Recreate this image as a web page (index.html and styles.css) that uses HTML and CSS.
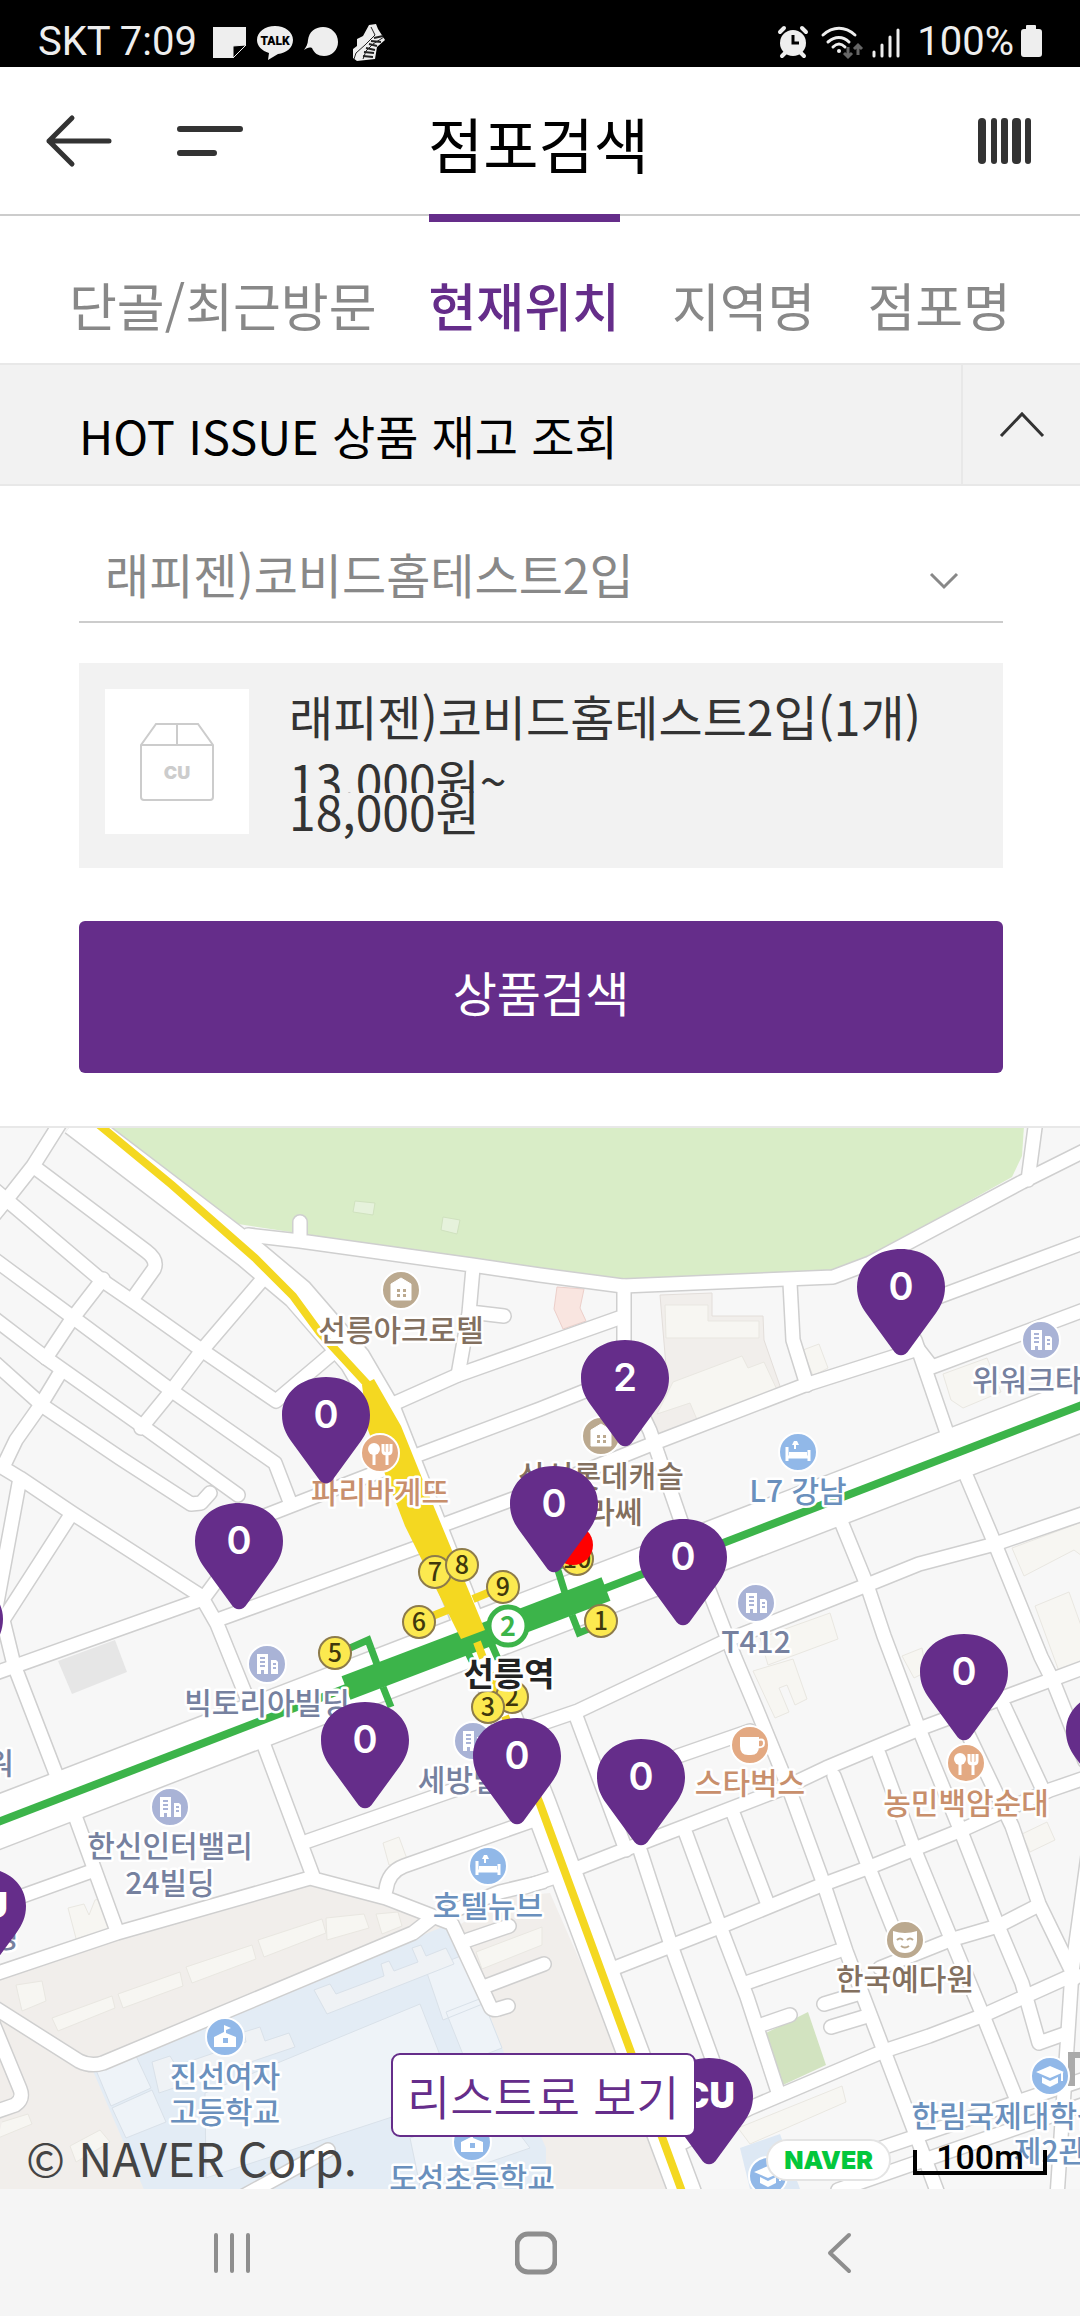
FILE: index.html
```html
<!DOCTYPE html>
<html lang="ko">
<head>
  <meta charset="UTF-8" />
  <meta name="viewport" content="width=device-width, initial-scale=1.0"/>
  <title>점포검색</title>
  <link rel="stylesheet" href="styles.css">
</head>
<body>
  <div class="status-bar">
    <div class="status-group">
      <span>SKT 7:09</span>
      <svg class="status-icons" width="172" height="38" viewBox="0 0 172 38" aria-hidden="true">
        <path d="M0 4h33v18L20 35H0z" fill="#eee"/>
        <path d="M33 22L20 35V23z" fill="#000" stroke="#eee"/>
        <path d="M62 3c10 0 18 6 18 14s-7 13-15 14l-10 6 1-7c-7-2-12-7-12-13 0-8 8-14 18-14z" fill="#eee"/>
        <text x="62" y="22" class="talk">TALK</text>
        <path d="M110 4c8 0 15 6 15 15 0 8-6 14-14 14-6 0-10-3-12-8-3-1-5 0-8 2 2-3 4-6 4-10 1-8 7-13 15-13z" fill="#eee"/>
        <path d="M156 2l7-1 2 5 7 11-8 7-2 12-18 2-4-3v-9l4-3v-7l6-3z" fill="#eee"/>
        <path d="M158 4l4 8-10 10-9 8-2 6M171 14l-11 7-7 7-3 8" fill="none" stroke="#222"/>
        <path d="M161 15l9-2M158 18l10 1M156 21l8 2M153 25l9 2M151 29l10 1M150 33l10 1" stroke="#222" stroke-width="2"/>
      </svg>
    </div>
    <div class="status-group">
      <svg class="status-icons" width="128" height="38" viewBox="0 0 128 38" aria-hidden="true">
        <circle cx="16" cy="20" r="13" fill="#eee"/>
        <path d="M3 9l4-4M29 9l-4-4M5 33l4-4M27 33l-4-4" stroke="#eee" stroke-width="4" stroke-linecap="round"/>
        <path d="M16 12v8h6" fill="none" stroke="#000" stroke-width="3"/>
        <g fill="none" stroke="#eee" stroke-width="3" stroke-linecap="round">
          <path d="M46 12c10-9 22-9 32 0M51 19c7-6 15-6 21 0M56 24c4-4 8-4 12 0"/>
        </g>
        <circle cx="62" cy="28" r="2" fill="#eee"/>
        <path d="M71 24v10m-4-4l4 4 4-4M81 32V22m-4 4l4-4 4 4" fill="none" stroke="#666" stroke-width="3"/>
        <path d="M97 33v-4M105 33V22M113 33V14M121 33V7" stroke="#eee" stroke-width="3" stroke-linecap="round"/>
      </svg>
      <span>100%</span>
      <svg width="22" height="36" viewBox="0 0 22 36" aria-hidden="true">
        <path d="M7 1h8q1 0 1 1v3h3q3 0 3 3v22q0 3-3 3H4q-3 0-3-3V8q0-3 3-3h2V2q0-1 1-1z" fill="#eee"/>
      </svg>
    </div>
  </div>

  <header class="header">
    <div class="header-side">
      <button class="icon-button" aria-label="뒤로">
        <svg width="68" height="54" viewBox="0 0 68 54"><path d="M27 4L4 27l23 23M4 27h60" fill="none" stroke="#333" stroke-width="5" stroke-linecap="round" stroke-linejoin="round"/></svg>
      </button>
      <button class="icon-button" aria-label="메뉴">
        <svg width="68" height="54" viewBox="0 0 68 54"><path d="M5 15h60M5 39h34" stroke="#333" stroke-width="6" stroke-linecap="round"/></svg>
      </button>
    </div>
    <h1>점포검색</h1>
    <div class="header-side header-right">
      <button class="icon-button" aria-label="바코드">
        <svg width="54" height="46" viewBox="0 0 54 46" fill="#333">
          <rect width="8" height="46" rx="4"/><rect x="13" width="6" height="46" rx="3"/><rect x="23" width="7" height="46" rx="3"/><rect x="34" width="9" height="46" rx="4"/><rect x="47" width="6" height="46" rx="3"/>
        </svg>
      </button>
    </div>
  </header>

  <nav class="tabs">
    <a href="#">단골/최근방문</a>
    <a href="#" class="active">현재위치</a>
    <a href="#">지역명</a>
    <a href="#">점포명</a>
  </nav>

  <div class="issue">
    <h2>HOT ISSUE 상품 재고 조회</h2>
    <button class="issue-toggle" aria-label="접기">
      <svg width="46" height="28" viewBox="0 0 46 28"><path d="M2 25L23 3l21 22" fill="none" stroke="#333" stroke-width="3"/></svg>
    </button>
  </div>

  <main class="search">
    <div class="select-wrap">
      <select class="product-select" aria-label="상품 선택">
        <option>래피젠)코비드홈테스트2입</option>
      </select>
      <svg class="select-arrow" width="30" height="18" viewBox="0 0 30 18" aria-hidden="true"><path d="M2 2l13 13L28 2" fill="none" stroke="#888" stroke-width="3"/></svg>
    </div>

    <div class="product">
      <div class="product-image">
        <svg width="76" height="80" viewBox="0 0 76 80" aria-hidden="true">
          <path d="M2 23L17 2h42l15 21v52q0 3-3 3H5q-3 0-3-3zM2 23h72M38 2v21" fill="none" stroke="#ccc" stroke-width="2"/>
          <text x="38" y="57" class="box-logo">CU</text>
        </svg>
      </div>
      <div class="product-text">
        <p class="product-name">래피젠)코비드홈테스트2입(1개)</p>
        <p class="price price-from">13,000원~</p>
        <p class="price">18,000원</p>
      </div>
    </div>

    <button class="search-button">상품검색</button>
  </main>

  <section class="map">
    <svg class="map-canvas" viewBox="0 0 1080 1061" role="img" aria-label="선릉역 주변 지도">
      <defs>
        <path id="pin" d="M0 0C25 0 44 16 44 38c0 11-4 19-9 26L8 101c-4 7-12 7-16 0l-27-37c-5-7-9-15-9-26C-44 16-25 0 0 0z"/>
        <g id="house">
          <circle r="19" fill="#bba98f" stroke="#fff" stroke-width="2"/>
          <path d="M-10-6L0-12l10 6v16h-20z" fill="#fff" stroke="#fff" stroke-linejoin="round"/>
          <path d="M-4 -1h3v3h-3zM2-1h3v3H2zM-4 4h3v3h-3zM2 4h3v3H2z" fill="#bba98f"/>
        </g>
        <g id="food">
          <circle r="19" fill="#e3a982" stroke="#fff" stroke-width="2"/>
          <circle cx="-6" cy="-4" r="6" fill="#fff"/>
          <path d="M-6 0v12M7-9v21M3-9v7q0 3 4 3t4-3v-7" fill="none" stroke="#fff" stroke-width="3"/>
        </g>
        <g id="cafe">
          <circle r="19" fill="#e3a982" stroke="#fff" stroke-width="2"/>
          <path d="M-10-8H9v9q0 9-8 9h-3q-8 0-8-9z" fill="#fff"/>
          <path d="M8-5q6-2 6 3t-6 4" fill="none" stroke="#fff" stroke-width="2"/>
        </g>
        <g id="office">
          <circle r="19" fill="#a9b3d6" stroke="#fff" stroke-width="2"/>
          <path d="M-10-10H1v20h-4V6h-3v4h-4z" fill="#fff"/>
          <path d="M4-4h5l2 2v12H4z" fill="#fff"/>
          <path d="M-7-6h5M-7-2h5M-7 2h5M6 0h3M6 4h3" stroke="#a9b3d6" stroke-width="2"/>
        </g>
        <g id="hotel">
          <circle r="19" fill="#91b8e8" stroke="#fff" stroke-width="2"/>
          <path d="M-11-5V9M11-2V9M-11 5h22" stroke="#fff" stroke-width="3"/>
          <path d="M-9 0H9v4H-9zM-6-7l2-4h3l2 4h-3v4h-2v-4z" fill="#fff"/>
        </g>
        <g id="school">
          <circle r="19" fill="#91b8e8" stroke="#fff" stroke-width="2"/>
          <path d="M-11 0L-1-5v-7l7 3-5 2v3l10 4v10h-22z" fill="#fff"/>
          <path d="M-2 1h5v5h-5z" fill="#91b8e8"/>
        </g>
        <g id="college">
          <circle r="19" fill="#91b8e8" stroke="#fff" stroke-width="2"/>
          <path d="M0-10l14 6L0 2l-14-6zM-8 1l8 4 8-4v6L0 11l-8-4z" fill="#fff"/>
          <path d="M12-4v9" stroke="#fff" stroke-width="2"/>
        </g>
        <g id="mask">
          <circle r="19" fill="#bba98f" stroke="#fff" stroke-width="2"/>
          <path d="M-12-9Q0-5 12-9V1Q11 13 0 13T-12 1z" fill="#fff"/>
          <path d="M-8 0q3-3 6 0M2 0q3-3 6 0M-4 6q4 3 8 0" fill="none" stroke="#bba98f" stroke-width="2"/>
        </g>
        <!-- street centre lines, stroked twice: casing then surface -->
        <g id="streets" fill="none" stroke-linecap="round" stroke-linejoin="round">
          <!-- north west -->
          <path d="M62-8L33 38 7 71-10 92M33 38l113 85q12 9 8 18l-20 28M-5 62l105 89 38 26 65 46 73 50 58-49"/>
          <path d="M-5 132l76 56 101 75 103 72 15 39M-5 191l51 39 99 70 93 67M-5 235l48 43 77 52 71 46 10-1 9-10"/>
          <path d="M262 152l-59 69-31 41-31 38M103 151l-31 40-26 39M60 245l-20 33-24 34-12 25M-8 333l28 17 52 35 129 83M20 350L-4 480M72 385L3 492l11 45 44 114"/>
          <path d="M-10 547l213-76 20-27M201 468l16 28 30 74M220 491l204-74M262 389l126-49"/>
          <!-- along the park -->
          <path d="M248 107l52 6 172 24 68 10 83 11 210-9 37-14 152-81 80-40M300 94v18M473 140l-4 45-11 62M470 184l34 4M1036-8l-8 60"/>
          <path d="M393 276l65-29 82-29 79-28M415 328l125-47 85-34M440 398l100-37 117-47 148-57 113-36 14 18 160-60M938 169l150-56"/>
          <path d="M624 158v90l26 55 31 90 29 72 25 65 24 57 29 71 34 93 24 72 38 100 38 100 15 40"/>
          <path d="M790 155l3 57 14 45M915 212l31 90M965 345l30 71 46 113 12 24 32 80M840 391l27 66 17 51 35 93 41 100 38 97 24 57 17 60 28-10"/>
          <path d="M1088 384l-93 32-76 20-52 21-139 55-150 71-38 13-40 14"/>
          <!-- south east grid -->
          <path d="M1088 538L919 601l-93 39-42 20-132 51-97 38-30 10M678 628l72-25M834 648l35 92 36 90M879 626l36 97 35 85 34 82 32 80M733 685l34 89M686 706l35 95 26 68 32 98M640 722l33 101 40 110M576 588l50 134M1004 578l39 84M965 600l47 98 27 78 36 74"/>
          <path d="M1088 649l-38 13-86 39-94 38-51 19-97 40-110 43M1039 777l-41 21-48 14-70 28M838 823l-95 33M1075 846l-91 41-55 21-45 15-134 57-70 36M824 876l33-10M831 899l33-10M764 896l26-9M1100 640l-28 204-5 75-10 150"/>
          <path d="M1088 975l-250 87M1088 950l-230 78"/>
          <!-- south west -->
          <path d="M262 612l51 136M74 685l43 118M-8 847l125-42 193-55 76 20 62 24M308 713l140-49 60-20M386 762q2-18 18-24l130-46M-8 878l87 55q12 6 24 2l310-130 18-14M452 796l38 82q2 5 8 3l10-3M468 812l41-14M486 858l58-22M-8 893l28 68q4 10-5 16l-23 8M92 743L-8 779M440 788l60-24 42-10M240 1070l88-48"/>
        </g>
      </defs>

      <rect width="1080" height="1061" fill="#f7f7f7"/>

      <!-- land use -->
      <path d="M108-2l130 98 106 16 196 28 83 11 210-8 34-13 145-81 10-21 2-30z" fill="#d9edc7"/>
      <path d="M-2 850l119-38 198-57 95 30 45 15 45-30 50-5 132 300H-2z" fill="#f1eeeb"/>
      <path d="M93 943l347-143h16l50 130 40 90v44H145z" fill="#e3ecf5"/>
      <path d="M205 965l215-89 36 92-250 82zM426 842l42-17 17 50-42 17zM446 884l36-14 20 50-36 14zM96 942l40-14 15 32-40 18zM112 980l40-18 14 32-40 16zM410 1010l90-30 30 40-110 38z" fill="#eef3f8" stroke="#d9e1e9"/>
      <path d="M766 905l42-21 18 53-43 20z" fill="#d2e3c0"/>
      <path d="M557 159l27 2-4 19 6 13-23 8-9-20z" fill="#f9e5e0" stroke="#eccfca"/>
      <path d="M660 167l52-2v23h51l1 24 17 49-124 47-7-20 16-50z" fill="#f1eeeb" stroke="#e3deda"/>
      <path d="M665 177h43v16h51v17h-93zM673 254l69-26 6 12 16-6 14 30-80 30-8-19-33 11z" fill="#f7f6f2" stroke="#e9e7e1"/>
      <path d="M58 533l57-21 12 32-55 22z" fill="#e6e6e6"/>
      <path d="M355 73l20 2-2 12-20-3zM443 89l17 3-3 14-16-4z" fill="#e6f2dc" stroke="#d0e2bf"/>
      <g fill="#f7f6f2" stroke="#e9e7e1">
        <path d="M803 222l16-6 9 24-15 8zM943 246l44-16 14 34-38 16-12-8zM1012 420l70-26v34l-8-6-50 26zM1035 478l34-14 25 70-34 12zM760 510l70-25 8 26-70 26zM753 543l40-12 14 40-12 6-8-20-8 3 10 24-14 6zM902 528l20-8 4 24-12 6zM1022 706l25-12 8 18-25 12zM738 1000l104-42 4 16-96 42z"/>
        <path d="M52 890l60-22 3 12-57 23zM118 866l62-22 3 14-60 22zM186 839l66-22 4 14-64 24zM258 812l64-21 4 14-62 24zM326 790l38-4 5 14-42 12zM16 857l26-4 4 20-24 10zM68 780l16-4 5 11 6-15 14-4 5 36-36 14zM383 715l16-6 8 22-18 6zM376 786l22-2 4 14-20 8zM476 824l66-25v18l-60 24zM2 994l26-8 4 10-34 14M70 1018l30-16 10 12-34 20z"/>
      </g>
      <g fill="#eff2f5" stroke="#d9e1e9">
        <path d="M314 862l16-6 6 10 48-18-3-12 8-3 5 10 24-9-6-14 9-3 5 11 20-8 8 16-127 50zM152 934l18-6 6 10 70-24-2-10 16-5 5 14 24-8 6 14-136 46z"/>
      </g>

      <!-- avenues -->
      <g fill="none" stroke="#cfcfcf">
        <use href="#streets" stroke-width="16"/>
        <path d="M75-8l173 132 50 42 57 66 31 53 47 119 107 272 149 399" stroke-width="34"/>
        <path d="M-20 701L1100 270" stroke-width="54"/>
      </g>
      <g fill="none" stroke="#fff">
        <use href="#streets" stroke-width="13"/>
        <path d="M75-8l173 132 50 42 57 66 31 53 47 119 107 272 149 399" stroke-width="31"/>
        <path d="M-20 701L1100 270" stroke-width="51"/>
      </g>

      <!-- line 2 -->
      <g fill="none" stroke="#3cb44a" stroke-width="8">
        <path d="M-20 701L1100 270"/>
        <path d="M350 520l18-8 10 27M383 559l8 20M577 431l-20 8 8 26M572 487l7 18 12-5M491 515l7 16M468 525l4 8" stroke-width="7"/>
        <path d="M346 560l260-99" stroke-width="25"/>
      </g>
      <!-- Bundang line -->
      <g fill="none" stroke="#f4d821" stroke-width="8">
        <path d="M98-4l74 61 83 73 38 38 27 37 48 52M505 588l35 88 144 393"/>
        <path d="M473 471l22-9M430 489l20-8M477 514l6 16M490 545l8 22"/>
      </g>
      <path d="M362 257l12-6 27 47 21 52 63 152-24 9-56-113-37-96z" fill="#f4d821"/>

      <g class="exits">
        <circle cx="335" cy="525" r="16"/><text x="335" y="534">5</text>
        <circle cx="419" cy="494" r="16"/><text x="419" y="503">6</text>
        <circle cx="435" cy="444" r="16"/><text x="435" y="453">7</text>
        <circle cx="462" cy="437" r="16"/><text x="462" y="446">8</text>
        <circle cx="503" cy="459" r="16"/><text x="503" y="468">9</text>
        <circle cx="577" cy="431" r="16"/><text x="577" y="440">10</text>
        <circle cx="601" cy="493" r="16"/><text x="601" y="502">1</text>
        <circle cx="512" cy="569" r="16"/><text x="512" y="578">2</text>
        <circle cx="488" cy="579" r="16"/><text x="488" y="588">3</text>
      </g>
      <circle cx="508" cy="498" r="19" fill="#fff" stroke="#3cb44a" stroke-width="5"/>
      <text x="508" y="508" class="line-number">2</text>
      <text x="509" y="558" class="station">선릉역</text>

      <!-- places -->
      <path d="M740 1020l40-14 20 55h-50z" fill="#dde8f4"/>
      <path d="M1068 924h12v6h-5v28h-7z" fill="#aaa"/>
      <use href="#house" x="401" y="162"/><use href="#house" x="601" y="308"/>
      <use href="#food" x="380" y="325"/><use href="#food" x="966" y="635"/><use href="#cafe" x="750" y="617"/>
      <use href="#office" x="1041" y="212"/><use href="#office" x="756" y="475"/><use href="#office" x="267" y="536"/><use href="#office" x="170" y="679"/><use href="#office" x="473" y="613"/>
      <use href="#hotel" x="798" y="324"/><use href="#hotel" x="488" y="738"/>
      <use href="#school" x="225" y="909"/><use href="#school" x="472" y="1014"/>
      <use href="#college" x="1050" y="948"/><use href="#college" x="768" y="1048"/>
      <use href="#mask" x="905" y="812"/>

      <g class="label brown">
        <text x="401" y="213">선릉아크로텔</text>
        <text x="601" y="359">삼성롯데캐슬</text>
        <text x="601" y="395">클라쎄</text>
        <text x="905" y="862">한국예다원</text>
      </g>
      <g class="label orange">
        <text x="380" y="375">파리바게뜨</text>
        <text x="750" y="666">스타벅스</text>
        <text x="966" y="686">농민백암순대</text>
      </g>
      <g class="label slate">
        <text x="1041" y="263">위워크타워</text>
        <text x="756" y="525">T412</text>
        <text x="267" y="586">빅토리아빌딩</text>
        <text x="170" y="729">한신인터밸리</text>
        <text x="170" y="766">24빌딩</text>
        <text x="473" y="663">세방빌딩</text>
        <text x="0" y="646">워</text>
        <text x="5" y="819">딩</text>
      </g>
      <g class="label blue">
        <text x="798" y="374">L7 강남</text>
        <text x="488" y="789">호텔뉴브</text>
        <text x="225" y="959">진선여자</text>
        <text x="225" y="995">고등학교</text>
        <text x="472" y="1061">도성초등학교</text>
        <text x="1008" y="999">한림국제대학원</text>
        <text x="1050" y="1034">제2관</text>
      </g>

      <circle cx="573" cy="417" r="20" fill="#f00"/>

      <!-- stores with stock counts -->
      <g class="pins">
        <a href="#" transform="translate(901 121)"><use href="#pin"/><text y="51">0</text></a>
        <a href="#" transform="translate(625 212)"><use href="#pin"/><text y="51">2</text></a>
        <a href="#" transform="translate(326 249)"><use href="#pin"/><text y="51">0</text></a>
        <a href="#" transform="translate(554 338)"><use href="#pin"/><text y="51">0</text></a>
        <a href="#" transform="translate(239 375)"><use href="#pin"/><text y="51">0</text></a>
        <a href="#" transform="translate(683 391)"><use href="#pin"/><text y="51">0</text></a>
        <a href="#" transform="translate(-41 453)"><use href="#pin"/></a>
        <a href="#" transform="translate(964 506)"><use href="#pin"/><text y="51">0</text></a>
        <a href="#" transform="translate(1110 565)"><use href="#pin"/></a>
        <a href="#" transform="translate(365 574)"><use href="#pin"/><text y="51">0</text></a>
        <a href="#" transform="translate(517 590)"><use href="#pin"/><text y="51">0</text></a>
        <a href="#" transform="translate(641 611)"><use href="#pin"/><text y="51">0</text></a>
        <a href="#" transform="translate(-18 740)"><use href="#pin"/><text y="50" class="cu">CU</text></a>
        <a href="#" transform="translate(709 930)"><use href="#pin"/><text y="50" class="cu">CU</text></a>
      </g>
    </svg>
    <button class="list-button">리스트로 보기</button>
    <p class="copyright">© NAVER Corp.</p>
    <div class="map-credit">
      <span class="naver">NAVER</span>
      <span class="scale">100m</span>
    </div>
  </section>

  <footer class="nav-bar">
    <button class="icon-button" aria-label="최근 앱">
      <svg width="42" height="44" viewBox="0 0 42 44"><path d="M4 4v36M20 4v36M36 4v36" stroke="#8e8e8e" stroke-width="4" stroke-linecap="round"/></svg>
    </button>
    <button class="icon-button" aria-label="홈">
      <svg width="42" height="44" viewBox="0 0 42 44"><rect x="2" y="3" width="38" height="38" rx="11" fill="none" stroke="#8e8e8e" stroke-width="5"/></svg>
    </button>
    <button class="icon-button" aria-label="뒤로 가기">
      <svg width="42" height="44" viewBox="0 0 42 44"><path d="M32 4L13 22l19 18" fill="none" stroke="#8e8e8e" stroke-width="4" stroke-linecap="round" stroke-linejoin="round"/></svg>
    </button>
  </footer>
</body>
</html>
```
FILE: styles.css
```css
* {
  box-sizing: border-box;
}

body {
  margin: 0;
  min-height: 100vh;
  display: flex;
  flex-direction: column;
  background-color: #fff;
  color: #000;
  font-family: "Noto Sans CJK KR", sans-serif;
  font-size: 48px;
}

h1, h2, p {
  margin: 0;
  font-weight: 400;
}

a {
  text-decoration: none;
}

button {
  padding: 0;
  border: 0;
  background: none;
  color: inherit;
  font-family: inherit;
  cursor: pointer;
}

svg {
  display: block;
}

.status-bar {
  display: flex;
  justify-content: space-between;
  align-items: center;
  height: 67px;
  padding: 16px 38px 0;
  background-color: #000;
  color: #eee;
  font-family: Roboto, sans-serif;
  font-size: 40px;
  line-height: 48px;
}

.status-group {
  display: flex;
  align-items: center;
  gap: 16px;
}

.status-group:last-child {
  gap: 6px;
}

.status-group:last-child .status-icons {
  margin-right: 6px;
}

.talk {
  font-family: Roboto, sans-serif;
  font-size: 12px;
  font-weight: 900;
  text-anchor: middle;
}

.header {
  display: grid;
  grid-template-columns: 1fr auto 1fr;
  align-items: center;
  height: 149px;
  padding: 0 48px 0 45px;
  border-bottom: 2px solid #ccc;
}

.header h1 {
  padding-top: 4px;
  font-size: 60px;
  line-height: 72px;
}

.header-side {
  display: flex;
  gap: 62px;
}

.header-right {
  justify-content: flex-end;
}

.tabs {
  display: flex;
  justify-content: center;
  gap: 52px;
  margin-top: -2px;
  border-bottom: 2px solid #e8e8e8;
}

.tabs a {
  padding: 45px 0 21px;
  border-top: 8px solid transparent;
  color: #888;
  font-size: 52px;
  line-height: 75px;
}

.tabs .active {
  border-top-color: #652d8a;
  color: #652d8a;
  font-weight: 500;
}

.issue {
  display: flex;
  background-color: #f2f2f2;
  border-bottom: 2px solid #e8e8e8;
}

.issue h2 {
  flex: 1;
  padding: 34px 0 13px 79px;
  font-size: 47px;
  line-height: 72px;
}

.issue-toggle {
  display: flex;
  justify-content: center;
  align-items: center;
  width: 119px;
  border-left: 2px solid #e8e8e8;
}

.search {
  display: flex;
  flex-direction: column;
  padding: 52px 77px 53px 79px;
  border-bottom: 2px solid #e8e8e8;
}

.select-wrap {
  position: relative;
  margin-bottom: 40px;
}

.product-select {
  appearance: none;
  width: 100%;
  height: 85px;
  padding: 0 80px 16px 26px;
  border: 0;
  border-bottom: 2px solid #ccc;
  border-radius: 0;
  background: none;
  color: #888;
  font-family: inherit;
  font-size: 48px;
}

.select-arrow {
  position: absolute;
  right: 44px;
  top: 34px;
  pointer-events: none;
}

.product {
  display: flex;
  gap: 40px;
  margin-bottom: 53px;
  padding: 26px;
  background-color: #f2f2f2;
  color: #333;
}

.product-image {
  display: flex;
  justify-content: center;
  align-items: center;
  width: 144px;
  height: 145px;
  margin-bottom: 8px;
  background-color: #fff;
}

.box-logo {
  fill: #ccc;
  font-family: Inter, sans-serif;
  font-size: 18px;
  font-weight: 900;
  text-anchor: middle;
}

.product-name {
  line-height: 52px;
}

.price {
  line-height: 34px;
}

.price-from {
  height: 52px;
  overflow: hidden;
  line-height: 76px;
}

.search-button {
  height: 152px;
  padding-bottom: 12px;
  border-radius: 6px;
  background-color: #652d8a;
  color: #fff;
  font-size: 48px;
}

.map {
  position: relative;
  overflow: hidden;
}

.map-canvas {
  width: 100%;
  height: auto;
}

.exits {
  font-size: 25px;
  font-weight: 500;
  text-anchor: middle;
}

.exits circle {
  fill: #fce94f;
  stroke: #8d7b4a;
  stroke-width: 2px;
}

.exits text {
  fill: #40380c;
}

.line-number {
  fill: #3cb44a;
  font-size: 27px;
  font-weight: 700;
  text-anchor: middle;
}

.station,
.label {
  paint-order: stroke;
  stroke: #fff;
  stroke-width: 5px;
  stroke-linejoin: round;
  text-anchor: middle;
}

.station {
  font-size: 33px;
  font-weight: 700;
  fill: #222;
}

.label {
  font-size: 30px;
  font-weight: 500;
}

.brown {
  fill: #83705f;
}

.orange {
  fill: #c88f6c;
}

.slate {
  fill: #76819f;
}

.blue {
  fill: #6a90bd;
}

.pins {
  fill: #652d8a;
}

.pins text {
  fill: #fff;
  font-family: Inter, sans-serif;
  font-size: 38px;
  font-weight: 600;
  text-anchor: middle;
}

.pins .cu {
  font-size: 35px;
  font-weight: 900;
}

.list-button {
  position: absolute;
  left: 391px;
  bottom: 52px;
  padding: 0 14px;
  border: 2px solid #652d8a;
  border-radius: 9px;
  background-color: #fff;
  color: #652d8a;
  font-size: 47px;
  font-weight: 350;
  line-height: 80px;
}

.copyright {
  position: absolute;
  left: 26px;
  bottom: 2px;
  color: #444;
  font-size: 47px;
  line-height: 60px;
}

.map-credit {
  position: absolute;
  right: 33px;
  bottom: 8px;
  display: flex;
  align-items: flex-end;
  gap: 22px;
}

.naver {
  padding: 0 16px;
  border: 2px solid #e4e4e4;
  border-radius: 21px;
  background-color: #fff;
  color: #03c73c;
  font-family: Inter, sans-serif;
  font-size: 25px;
  font-weight: 900;
  line-height: 38px;
}

.scale {
  position: relative;
  width: 134px;
  margin-bottom: 6px;
  color: #000;
  font-family: Roboto, sans-serif;
  font-size: 34px;
  font-weight: 500;
  line-height: 36px;
  text-align: center;
}

.scale::after {
  content: "";
  position: absolute;
  left: 0;
  right: 0;
  bottom: 0;
  height: 21px;
  border: 4px solid #000;
  border-top: 0;
}

.nav-bar {
  display: flex;
  flex: 1;
  justify-content: space-between;
  align-items: center;
  min-height: 126px;
  padding: 0 221px 0 212px;
  background-color: #f5f5f5;
}
```
